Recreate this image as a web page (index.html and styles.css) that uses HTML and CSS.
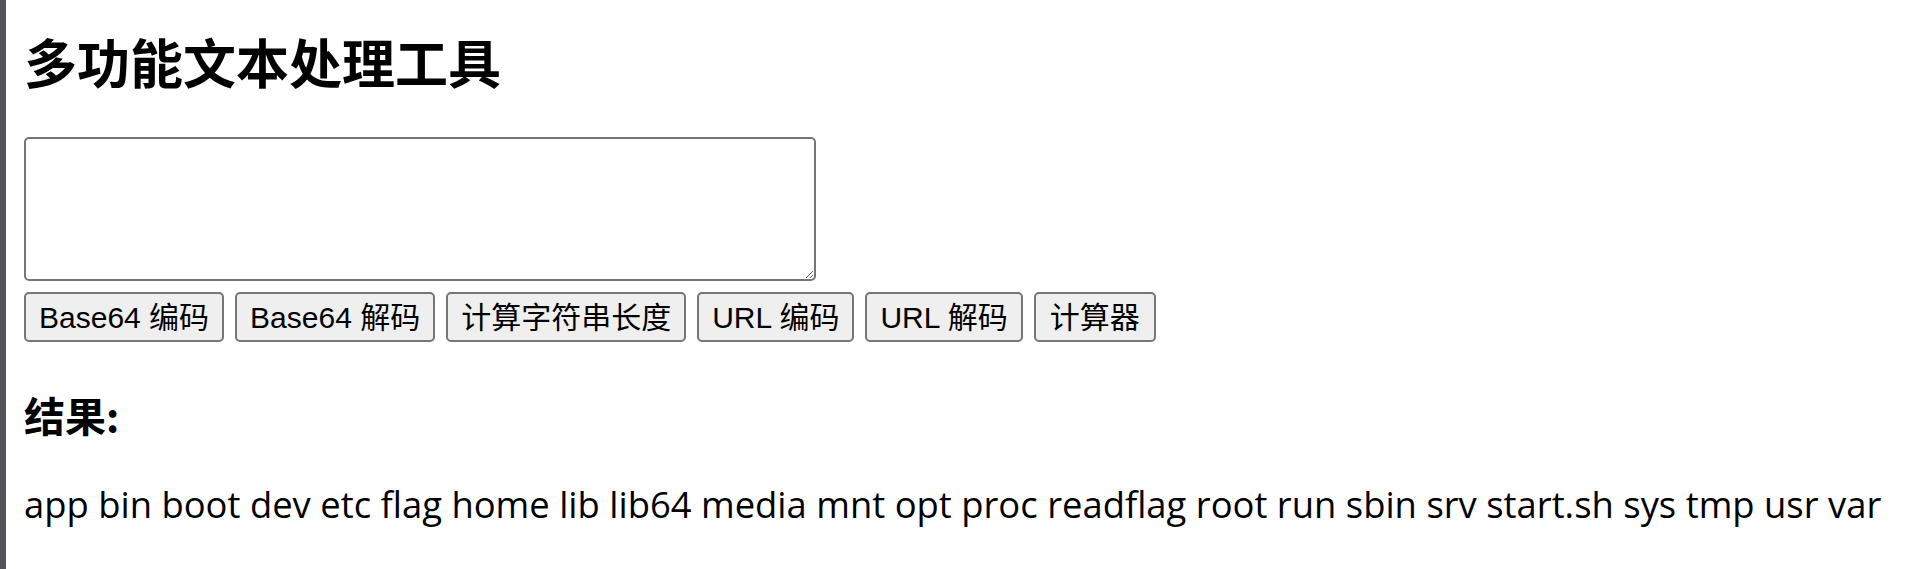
FILE: index.html
```html
<!DOCTYPE html>
<html lang="zh-CN">
<head>
<meta charset="utf-8">
<title>多功能文本处理工具</title>
<link rel="stylesheet" href="styles.css">
</head>
<body>
<div class="page">
  <h1 class="title">多功能文本处理工具</h1>
  <textarea class="input"></textarea>
  <div class="actions">
    <button class="btn">Base64 编码</button>
    <button class="btn">Base64 解码</button>
    <button class="btn">计算字符串长度</button>
    <button class="btn">URL 编码</button>
    <button class="btn">URL 解码</button>
    <button class="btn">计算器</button>
  </div>
  <h3 class="result-title">结果:</h3>
  <p class="result">app bin boot dev etc flag home lib lib64 media mnt opt proc readflag root run sbin srv start.sh sys tmp usr var</p>
</div>
</body>
</html>
```

FILE: styles.css
```css
html, body {
  margin: 0;
  padding: 0;
  background: #ffffff;
}

.page {
  box-sizing: border-box;
  min-height: 569px;
  border-left: 6px solid #515359;
  padding: 0 0 0 18px;
  color: #000000;
  display: flex;
  flex-direction: column;
  align-items: flex-start;
}

.title {
  margin: 0;
  padding-top: 31px;
  font: 700 53px/60px "Noto Sans CJK SC", sans-serif;
}

.input {
  display: block;
  box-sizing: border-box;
  width: 792px;
  height: 144px;
  margin: 46px 0 0 0;
  border: 2px solid #767676;
  border-radius: 5px;
  background: #ffffff;
  font: 30px "Liberation Mono", monospace;
}

.actions {
  display: flex;
  gap: 11px;
  margin-top: 11px;
}

.btn {
  box-sizing: border-box;
  height: 50px;
  padding: 2px 13px 0;
  margin: 0;
  border: 2px solid #767676;
  border-radius: 5px;
  background: #efefef;
  color: #000000;
  font: 30px/1 "Liberation Sans", "Noto Sans CJK SC", sans-serif;
}

.btn:last-child {
  padding: 2px 14px 0;
}

.result-title {
  margin: 51px 0 0 0;
  font: 700 41px/42px "Noto Sans CJK SC", sans-serif;
}

.result {
  margin: 51px 0 0 0;
  font: 36.4px/36px "Open Sans", "Noto Sans CJK SC", sans-serif;
  white-space: nowrap;
}
```
